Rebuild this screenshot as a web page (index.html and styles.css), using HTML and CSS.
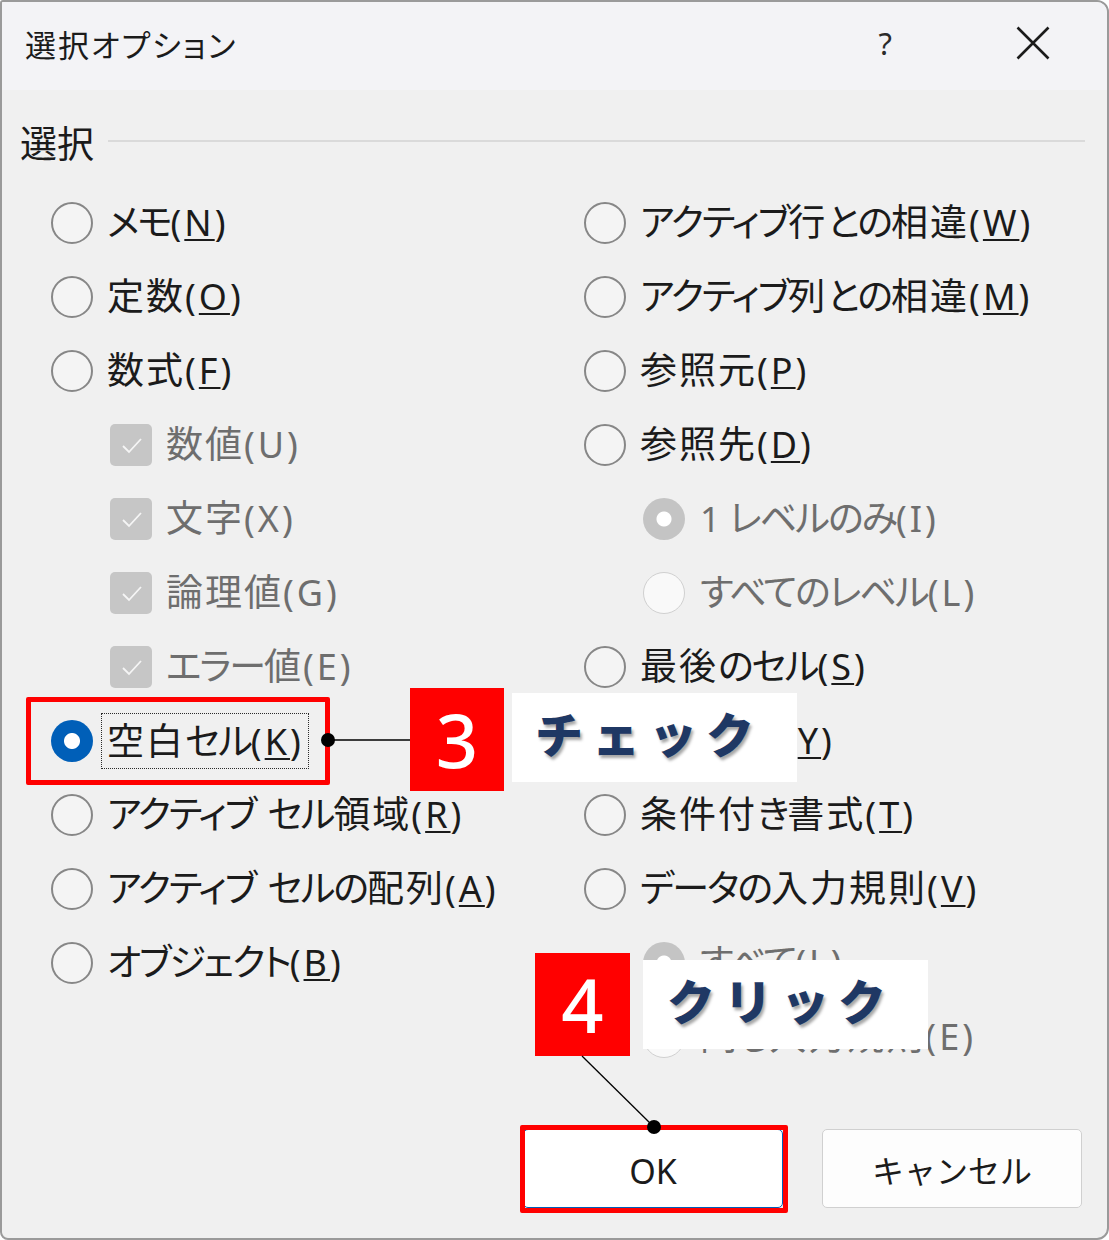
FILE: index.html
```html
<!DOCTYPE html>
<html lang="ja">
<head>
<meta charset="utf-8">
<title>選択オプション</title>
<link rel="stylesheet" href="styles.css">
</head>
<body>
<div class="stage">
  <div class="dialog">
    <header class="titlebar">
      <span class="title">選択オプション</span>
      <span class="help">?</span>
      <span class="close"><svg width="34" height="34" viewBox="0 0 34 34"><path d="M1.5 1.5 L32.5 32.5 M32.5 1.5 L1.5 32.5" stroke="#1b1b1b" stroke-width="2.6" fill="none"/></svg></span>
    </header>
    <main class="content">
      <div class="group-head"><span class="group-title">選択</span><span class="rule"></span></div>
      <div class="cols">
        <div class="col">
          <div class="row"><span class="radio"></span><span class="label">メモ<span class="key">(<u>N</u>)</span></span></div>
          <div class="row"><span class="radio"></span><span class="label"><span class="kj">定数</span><span class="key">(<u>O</u>)</span></span></div>
          <div class="row"><span class="radio"></span><span class="label"><span class="kj">数式</span><span class="key">(<u>F</u>)</span></span></div>
          <div class="row sub"><span class="check"><svg width="42" height="42" viewBox="0 0 42 42"><path d="M13 22 L19 28 L31 15" stroke="#f5f5f5" stroke-width="1.8" fill="none"/></svg></span><span class="label dis"><span class="kj">数値</span><span class="key">(U)</span></span></div>
          <div class="row sub"><span class="check"><svg width="42" height="42" viewBox="0 0 42 42"><path d="M13 22 L19 28 L31 15" stroke="#f5f5f5" stroke-width="1.8" fill="none"/></svg></span><span class="label dis"><span class="kj">文字</span><span class="key">(X)</span></span></div>
          <div class="row sub"><span class="check"><svg width="42" height="42" viewBox="0 0 42 42"><path d="M13 22 L19 28 L31 15" stroke="#f5f5f5" stroke-width="1.8" fill="none"/></svg></span><span class="label dis"><span class="kj">論理値</span><span class="key">(G)</span></span></div>
          <div class="row sub"><span class="check"><svg width="42" height="42" viewBox="0 0 42 42"><path d="M13 22 L19 28 L31 15" stroke="#f5f5f5" stroke-width="1.8" fill="none"/></svg></span><span class="label dis">エラー<span class="kj">値</span><span class="key">(E)</span></span></div>
          <div class="row"><span class="radio on"></span><span class="label focus"><span class="kj">空白</span>セル<span class="key">(<u>K</u>)</span></span></div>
          <div class="row"><span class="radio"></span><span class="label">アクティブ<span class="sp"> </span>セル<span class="kj">領域</span><span class="key">(<u>R</u>)</span></span></div>
          <div class="row"><span class="radio"></span><span class="label">アクティブ<span class="sp"> </span>セルの<span class="kj">配列</span><span class="key">(<u>A</u>)</span></span></div>
          <div class="row"><span class="radio"></span><span class="label">オブジェクト<span class="key">(<u>B</u>)</span></span></div>
        </div>
        <div class="col">
          <div class="row"><span class="radio"></span><span class="label">アクティブ<span class="kj">行</span>との<span class="kj">相違</span><span class="key">(<u>W</u>)</span></span></div>
          <div class="row"><span class="radio"></span><span class="label">アクティブ<span class="kj">列</span>との<span class="kj">相違</span><span class="key">(<u>M</u>)</span></span></div>
          <div class="row"><span class="radio"></span><span class="label"><span class="kj">参照元</span><span class="key">(<u>P</u>)</span></span></div>
          <div class="row"><span class="radio"></span><span class="label"><span class="kj">参照先</span><span class="key">(<u>D</u>)</span></span></div>
          <div class="row sub"><span class="radio dis-on"></span><span class="label dis"><span class="num">1 </span>レベルのみ<span class="key">(I)</span></span></div>
          <div class="row sub"><span class="radio dis-off"></span><span class="label dis">すべてのレベル<span class="key">(L)</span></span></div>
          <div class="row"><span class="radio"></span><span class="label"><span class="kj">最後</span>のセル<span class="key">(<u>S</u>)</span></span></div>
          <div class="row"><span class="radio"></span><span class="label"><span class="kj">可視</span>セル<span class="key">(<u>Y</u>)</span></span></div>
          <div class="row"><span class="radio"></span><span class="label"><span class="kj">条件付</span>き<span class="kj">書式</span><span class="key">(<u>T</u>)</span></span></div>
          <div class="row"><span class="radio"></span><span class="label">データの<span class="kj">入力規則</span><span class="key">(<u>V</u>)</span></span></div>
          <div class="row sub"><span class="radio dis-on"></span><span class="label dis">すべて<span class="key">(L)</span></span></div>
          <div class="row sub"><span class="radio dis-off"></span><span class="label dis"><span class="kj">同</span>じ<span class="kj">入力規則</span><span class="key">(E)</span></span></div>
        </div>
      </div>
      <div class="buttons">
        <button class="btn btn-ok">OK</button>
        <button class="btn">キャンセル</button>
      </div>
    </main>
  </div>

  <div class="hl hl-k"></div>
  <div class="badge badge-3">3</div>
  <div class="callout callout-check">チェック</div>
  <div class="badge badge-4">4</div>
  <div class="callout callout-click">クリック</div>
  <div class="hl hl-ok"></div>
  <svg class="leaders" width="1109" height="1240" viewBox="0 0 1109 1240">
    <line x1="328" y1="740" x2="410" y2="740" stroke="#000" stroke-width="1.3"/>
    <circle cx="328" cy="740" r="7" fill="#000"/>
    <line x1="582" y1="1056" x2="654" y2="1127" stroke="#000" stroke-width="1.3"/>
    <circle cx="654" cy="1127" r="7" fill="#000"/>
  </svg>
</div>
</body>
</html>
```

FILE: styles.css
```css
html, body {
  margin: 0;
  padding: 0;
}

body {
  font-family: "Noto Sans CJK JP", "Noto Sans", sans-serif;
  background: #ffffff;
  color: #1b1b1b;
}

.stage {
  position: relative;
  width: 1109px;
  height: 1240px;
}

.dialog {
  box-sizing: border-box;
  width: 1109px;
  height: 1240px;
  border: 2px solid #9a9a9a;
  border-radius: 3px 12px 12px 8px;
  background: #f0f0f0;
  overflow: hidden;
  display: flex;
  flex-direction: column;
}

/* title bar */
.titlebar {
  box-sizing: border-box;
  height: 88px;
  flex: none;
  background: #f3f3f6;
  display: flex;
  align-items: center;
  padding: 0 57px 6px 23px;
}

.title {
  flex: 1;
  font-size: 31px;
  line-height: 1;
  color: #1b1b1b;
  font-feature-settings: "palt";
  letter-spacing: 2px;
}

.help {
  font-family: "Noto Sans", sans-serif;
  font-size: 31px;
  line-height: 1;
  color: #2b2b2b;
  margin-right: 124px;
}

.close {
  display: flex;
  width: 34px;
  height: 34px;
}

/* content */
.content {
  flex: 1;
  display: flex;
  flex-direction: column;
}

.group-head {
  display: flex;
  align-items: center;
  height: 40px;
  margin: 32px 22px 0 18px;
}

.group-title {
  font-size: 37px;
  line-height: 1;
  color: #1b1b1b;
}

.rule {
  flex: 1;
  height: 2px;
  background: #dadada;
  margin-left: 14px;
  margin-top: -3px;
}

.cols {
  display: grid;
  grid-template-columns: 533px 1fr;
  margin: 24px 0 0 49px;
}

.row {
  height: 74px;
  display: flex;
  align-items: center;
}

.row.sub {
  padding-left: 59px;
}

.radio {
  box-sizing: border-box;
  width: 42px;
  height: 42px;
  flex: none;
  border-radius: 50%;
  border: 2px solid #878787;
  background: #f4f4f4;
  margin-right: 14px;
}

.radio.on {
  border: none;
  background: radial-gradient(circle, #ffffff 0 7.5px, #005fb8 8.5px);
}

.radio.dis-on {
  border: none;
  background: radial-gradient(circle, #ffffff 0 7px, #c4c4c4 8px);
  margin-right: 15px;
}

.radio.dis-off {
  border: 1.5px solid #d0d0d0;
  background: #f9f9f9;
  margin-right: 15px;
}

.check {
  box-sizing: border-box;
  width: 42px;
  height: 42px;
  flex: none;
  border-radius: 5px;
  background: #c6c6c6;
  margin-right: 14px;
  display: flex;
}

.label {
  font-size: 37px;
  line-height: 1;
  color: #1b1b1b;
  white-space: nowrap;
  padding-bottom: 3px;
  font-feature-settings: "palt";
  letter-spacing: -2px;
}

.kj {
  letter-spacing: 2px;
}

.sp {
  letter-spacing: 4px;
}

.key {
  font-family: "Noto Sans", sans-serif;
  font-size: 36px;
  letter-spacing: 3px;
}

.num {
  font-family: "Noto Sans", sans-serif;
  font-size: 35px;
  letter-spacing: 0;
}

.label u {
  text-decoration-thickness: 2px;
  text-underline-offset: 3px;
}

.label.dis {
  color: #6e6e6e;
}

.label.focus {
  border: 1px dotted #2a2a2a;
  padding: 7px 4px 8px 5px;
  margin-left: -6px;
}

/* buttons */
.buttons {
  margin-top: auto;
  display: flex;
  justify-content: flex-end;
  gap: 39px;
  padding: 0 25px 30px 0;
}

.btn {
  box-sizing: border-box;
  width: 260px;
  height: 79px;
  border: 1px solid #d0d0d0;
  border-radius: 5px;
  background: #fdfdfd;
  font-family: "Noto Sans", "Noto Sans CJK JP", sans-serif;
  font-size: 32px;
  color: #1b1b1b;
  display: flex;
  align-items: center;
  justify-content: center;
  padding: 0;
}

.btn-ok {
  border-color: #005fb8;
  font-size: 34px;
  background: #ffffff;
  padding-top: 4px;
}

/* annotations overlay */
.hl {
  position: absolute;
  box-sizing: border-box;
  border: 5px solid #ff0000;
  border-radius: 2px;
}

.hl-k {
  left: 26px;
  top: 697px;
  width: 304px;
  height: 88px;
}

.hl-ok {
  left: 520px;
  top: 1125px;
  width: 268px;
  height: 88px;
}

.badge {
  position: absolute;
  background: #ff0000;
  color: #ffffff;
  font-family: "Noto Sans", sans-serif;
  font-weight: 500;
  font-size: 74px;
  line-height: 1;
  display: flex;
  align-items: center;
  justify-content: center;
}

.badge-3 {
  left: 410px;
  top: 688px;
  width: 94px;
  height: 103px;
}

.badge-4 {
  left: 535px;
  top: 953px;
  width: 95px;
  height: 103px;
}

.callout {
  position: absolute;
  box-sizing: border-box;
  width: 285px;
  height: 89px;
  background: #ffffff;
  color: #1f3864;
  font-family: "Noto Sans CJK JP", sans-serif;
  font-weight: 900;
  font-size: 48px;
  letter-spacing: 9px;
  line-height: 1;
  display: flex;
  align-items: center;
  padding: 0 0 12px 23px;
  text-shadow: 2px 3px 3px rgba(0, 0, 0, 0.35);
}

.callout-check {
  left: 512px;
  top: 693px;
}

.callout-click {
  left: 643px;
  top: 960px;
  padding-left: 24px;
}

.leaders {
  position: absolute;
  left: 0;
  top: 0;
  pointer-events: none;
}
```
